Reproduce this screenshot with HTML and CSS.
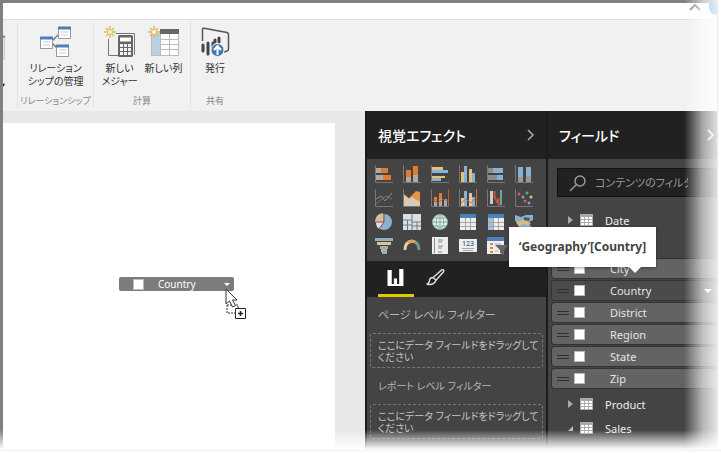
FILE: index.html
```html
<!DOCTYPE html>
<html lang="ja">
<head>
<meta charset="utf-8">
<title>Power BI Desktop</title>
<link rel="stylesheet" href="styles.css">
</head>
<body>
<div class="window">
  <header class="titlebar">
    <svg class="collapse" viewBox="0 0 12 8"><path d="M1 7l5-5 5 5" fill="none" stroke="#8a8a8a" stroke-width="2"/></svg>
    <span class="help"></span>
  </header>

  <nav class="ribbon">
    <div class="group group-cut">
      <svg viewBox="0 0 14 84"><path d="M0 11h1v24H0" fill="none" stroke="#bbb"/><path d="M0 11h2" stroke="#4a80b5" stroke-width="2"/><path d="M-3 60h5l-2 3z" fill="#222"/></svg>
    </div>
    <div class="group group-rel">
      <div class="commands">
        <button class="command">
          <svg class="command-icon" viewBox="0 0 32 32">
            <path d="M13 15l6-6M13 17l5 5" stroke="#777" stroke-width="1.5"/>
            <g fill="#fff" stroke="#9a9a9a"><path d="M1.500 11.500h12v11h-12zM19.500 1.500h12v11h-12zM17.500 19.500h12v11h-12z"/></g>
            <path d="M1 12h13M19 2h13M17 20h13" stroke="#4a80b5" stroke-width="3"/>
            <path d="M4 16h7M4 19h7M22 6h7M22 9h7M20 24h7M20 27h7" stroke="#c4d0dc"/>
          </svg>
          <span>リレーション<br>シップの管理</span>
        </button>
      </div>
      <span class="group-label">リレーションシップ</span>
    </div>
    <div class="group group-calc">
      <div class="commands">
        <button class="command">
          <svg class="command-icon" viewBox="0 0 32 32">
            <path d="M12 7.500h18.500V29M4.500 13v16.500H14" fill="none" stroke="#777"/>
            <rect x="14" y="9" width="15" height="22" rx="1.500" fill="#666"/>
            <path d="M16 11.500h11v4H16z" fill="#fff"/>
            <path d="M16 18h3v3h-3zM20 18h3v3h-3zM24 18h3v3h-3zM16 22h3v3h-3zM20 22h3v3h-3zM24 22h3v3h-3zM16 26h3v3h-3zM20 26h3v3h-3zM24 26h3v3h-3z" fill="#f3f3f3"/>
            <path d="M6 0v12M0 6h12M2 2l8 8M10 2l-8 8" stroke="#dfbd67" stroke-width="1.500"/><circle cx="6" cy="6" r="2.500" fill="#fff5d5" stroke="#dfbd67"/>
          </svg>
          <span>新しい<br>メジャー</span>
        </button>
        <button class="command">
          <svg class="command-icon" viewBox="0 0 32 32">
            <path d="M3.500 5.500h27v24h-27z" fill="#fff" stroke="#bbb"/><path d="M4 6h9v23H4z" fill="#b9d0e3"/>
            <path d="M12 3h19v5H12z" fill="#666"/><path d="M12.500 8v21M21.500 8v21M12 13.500h18M12 18.500h18M12 23.500h18" stroke="#bbb"/>
            <path d="M6 0v12M0 6h12M2 2l8 8M10 2l-8 8" stroke="#dfbd67" stroke-width="1.500"/><circle cx="6" cy="6" r="2.500" fill="#fff5d5" stroke="#dfbd67"/>
          </svg>
          <span>新しい列</span>
        </button>
      </div>
      <span class="group-label">計算</span>
    </div>
    <div class="group group-share">
      <div class="commands">
        <button class="command">
          <svg class="command-icon" viewBox="0 0 32 32">
            <path d="M3.500 15V3.500Q3.500 2 5 2.200L28 6.500Q29.500 7 29.500 8.500V23q0 1.500-1.500 2l-3 1" fill="none" stroke="#555" stroke-width="1.500"/>
            <path d="M4 19v6M9 17v11M14 17v9M16 14v2M20 12v4" stroke="#444" stroke-width="3" stroke-linecap="round"/>
            <circle cx="18.500" cy="24" r="6.500" fill="#4379b0" stroke="#f1f1f1"/>
            <path d="M18.500 29v-8M15 24l3.500-4 3.500 4" fill="none" stroke="#fff" stroke-width="2"/>
          </svg>
          <span>発行</span>
        </button>
      </div>
      <span class="group-label">共有</span>
    </div>
  </nav>

  <div class="workspace">
    <main class="report">
      <div class="page">
        <div class="chip">
          <i class="box"></i><span>Country</span><i class="caret"></i>
          <svg class="cursor" viewBox="0 0 22 32">
            <path d="M2 17h11v8H2z" fill="#fff" stroke="#333" stroke-dasharray="2 1"/>
            <path d="M1 1v15l3.500-3 3 6 3-1.500-3-5.500h4.500z" fill="#fff" stroke="#333"/>
            <path d="M10.500 20.500h10v10h-10z" fill="#fff" stroke="#222"/><path d="M15.500 23v5M13 25.500h5" stroke="#222" stroke-width="1.500"/>
          </svg>
        </div>
      </div>
    </main>

    <aside class="pane visuals">
      <h2 class="pane-title">視覚エフェクト<svg class="chevron" viewBox="0 0 8 12"><path d="M1 1l5 5-5 5" fill="none" stroke="#aaa" stroke-width="1.500"/></svg></h2>
      <div class="gallery">
        <svg viewBox="0 0 18 18"><path d="M.5 0v17.500H18" class="axis"/><path d="M1 3h5v5H1zM1 10h7v5H1z" fill="#aaa"/><path d="M6 3h7v5H6zM8 10h8v5H8z" fill="#e07b30"/></svg>
        <svg viewBox="0 0 18 18"><path d="M.5 0v17.500H18" class="axis"/><path d="M3 12h5v5H3zM10 10h5v7h-5z" fill="#aaa"/><path d="M3 5h5v7H3zM10 1h5v9h-5z" fill="#e07b30"/></svg>
        <svg viewBox="0 0 18 18"><path d="M.5 0v17.500H18" class="axis"/><path d="M1 2h11v3H1zM1 11h13v2H1z" fill="#e2c27a"/><path d="M1 5h16v3H1zM1 13h9v3H1z" fill="#8ab1d1"/></svg>
        <svg viewBox="0 0 18 18"><path d="M.5 0v17.500H18" class="axis"/><path d="M2 7h3v10H2zM10 4h3v13h-3z" fill="#e2c27a"/><path d="M5 1h3v16H5zM13 8h3v9h-3z" fill="#8ab1d1"/></svg>
        <svg viewBox="0 0 18 18"><path d="M.5 0v17.500H18" class="axis"/><path d="M1 3h5v5H1zM1 10h9v5H1z" fill="#8b8b8b"/><path d="M6 3h10v5H6zM10 10h6v5h-6z" fill="#8ab1d1"/></svg>
        <svg viewBox="0 0 18 18"><path d="M.5 0v17.500H18" class="axis"/><path d="M3 12h5v5H3zM11 11h5v6h-5z" fill="#999"/><path d="M3 2h5v10H3zM11 2h5v9h-5z" fill="#8ab1d1"/></svg>

        <svg viewBox="0 0 18 18"><path d="M.5 0v17.500H18" class="axis"/><path d="M1 10l5-3 4 5 7-8" fill="none" stroke="#6596bb"/><path d="M1 15l6-5 4-3 6 3" fill="none" stroke="#b75a48"/></svg>
        <svg viewBox="0 0 18 18"><path d="M1 5l5 4 7-7 4 1v14H1z" fill="#e99445"/><path d="M1 6l5 4 3-2 8 5v4H1z" fill="#d8cab4"/><path d="M.5 0v17.500H18" class="axis"/></svg>
        <svg viewBox="0 0 18 18"><path d="M17.500 0v17.500H.5V0" class="axis"/><path d="M3 8h3v9H3zM8 4h3v13H8zM13 10h3v7h-3z" fill="#aaa"/><path d="M3 8h3v5H3zM8 4h3v6H8z" fill="#e07b30"/><path d="M17.500 0v17M2 11l5 3 5-4 5 2" fill="none" stroke="#c75532"/></svg>
        <svg viewBox="0 0 18 18"><path d="M.5 0v17.500H18" class="axis"/><path d="M2 9h3v8H2zM10 4h3v13h-3z" fill="#d8cab4"/><path d="M5 2h3v15H5zM13 8h3v9h-3z" fill="#8ab1d1"/><path d="M17.500 0v17M2 14l5-4 5 4 4-4" fill="none" stroke="#d86d2d"/></svg>
        <svg viewBox="0 0 18 18"><path d="M.5 0v17.500H18" class="axis"/><path d="M4.500 2v13" stroke="#ccc" stroke-width="3"/><path d="M7.500 2v6l4 7V9" fill="none" stroke="#c65348" stroke-width="2"/><path d="M14 1v15" stroke="#6ba691" stroke-width="2"/></svg>
        <svg viewBox="0 0 18 18"><path d="M.5 0v17.500H18" class="axis"/><g fill="#6fa4c8"><circle cx="8" cy="8" r="1.500"/><circle cx="14" cy="14" r="1.500"/></g><g fill="#d06150"><circle cx="4" cy="5" r="1.500"/><circle cx="10" cy="12" r="1.500"/></g><circle cx="12" cy="4" r="1.500" fill="#6ba691"/><circle cx="16" cy="8" r="1.500" fill="#e2c27a"/></svg>

        <svg viewBox="0 0 18 18"><circle cx="9" cy="9" r="8" fill="#8ab1d1"/><path d="M8 9V0Q0 1 0 9z" fill="#d8bca0"/><path d="M9 9H1q0 5 3 7z" fill="#ddd"/><path d="M9 9V1M9 9H1M9 9l-5 7" stroke="#a4483c"/></svg>
        <svg viewBox="0 0 18 18"><path d="M0 1h18v16H0z" fill="#ddd"/><path d="M0 7h9M9 1v16M9 9h9M4.500 7v10M0 12h9M14 9v8M9 13h9" stroke="#5f8095" stroke-width="1"/></svg>
        <svg viewBox="0 0 18 18"><circle cx="9" cy="9" r="7.500" fill="#e8f2ef" stroke="#89b7aa"/><path d="M1 9h16M9 1v16M3 5h12M3 13h12M9 1Q1 9 9 17Q17 9 9 1" fill="none" stroke="#7eaaa4"/></svg>
        <svg viewBox="0 0 18 18"><path d="M1 1h16v16H1z" fill="#eee"/><path d="M1 1h16v4H1z" fill="#4b81b8"/><path d="M1 9.500h16M1 13.500h16M6.500 5v12M11.500 5v12" stroke="#a6a6a6"/></svg>
        <svg viewBox="0 0 18 18"><path d="M1 1h16v16H1z" fill="#eee"/><path d="M1 1h16v4H1z" fill="#4b81b8"/><path d="M1 5h5v12H1z" fill="#9ec0db"/><path d="M1 9.500h16M1 13.500h16M6.500 5v12M11.500 5v12" stroke="#a6a6a6"/></svg>
        <svg viewBox="0 0 18 18"><path d="M0 2l6 2 5-2h7v5l-4 2 3 8-8-3-5 2 2-5-6-3z" fill="#8ab1d1"/><path d="M1 9l7-2 8 3-3 2-5-1-4 3z" fill="#ddbb78"/><path d="M9 4l6 1-1 3-5-1z" fill="#4f5965"/></svg>

        <svg viewBox="0 0 18 18"><path d="M0 1h18v3H0zM5 9h8v3H5zM7 15h5v2H7z" fill="#8ab1d1"/><path d="M2 5h14v3H2z" fill="#e2c27a"/><path d="M6 12h6v3H6z" fill="#bcae8a"/></svg>
        <svg viewBox="0 0 18 18"><path d="M2 13q0-8 7-9" fill="none" stroke="#e5cf98" stroke-width="3"/><path d="M8 4q8 0 8 9" fill="none" stroke="#709d87" stroke-width="3"/><path d="M5 6q3-3 7-1" fill="none" stroke="#e3a35d" stroke-width="3"/></svg>
        <svg viewBox="0 0 18 18"><path d="M1 0h16v17H1z" fill="#eee"/><path d="M3.500 1v15" stroke="#888"/><path d="M7 3h5M7 5h4M7 9h5M7 11h4M7 15h4" stroke="#888"/></svg>
        <svg viewBox="0 0 18 18"><path d="M0 2h18v13H0z" fill="#eee"/><text x="9" y="9" class="digits">123</text><path d="M3 11.500h12M4 13.500h10" stroke="#aaa"/></svg>
        <svg viewBox="0 0 22 18" class="wide"><path d="M0 0h17v17H0z" fill="#eee"/><path d="M0 0h17v4H0z" fill="#4b81b8"/><path d="M3 7h3M3 11h3M3 15h3" stroke="#d08d46" stroke-width="2"/><path d="M8 7h6M8 14h3" stroke="#ccc" stroke-width="2"/><path d="M8 8h13l-4 5v5l-4-2v-3z" fill="#666"/></svg>
      </div>
      <div class="tabs">
        <button class="tab active" aria-label="フィールド"><svg viewBox="0 0 16 16"><path d="M0 1h4v13H0zM6 9h3v5H6zM11 0h4v14h-4zM0 14h15v2H0z" fill="#fff"/></svg></button>
        <button class="tab" aria-label="書式"><svg viewBox="0 0 20 18"><path d="M7 9l9-8q3-1 2 2l-8 9zM7 9q-4 0-4 4-1 3-3 3 7 2 10-4zM7 9l3 3" fill="none" stroke="#ddd" stroke-width="1.500"/></svg></button>
      </div>
      <section class="filters">
        <h3>ページ レベル フィルター</h3>
        <p class="drop">ここにデータ フィールドをドラッグして<br>ください</p>
        <h3 class="small">レポート レベル フィルター</h3>
        <p class="drop">ここにデータ フィールドをドラッグして<br>ください</p>
      </section>
    </aside>

    <aside class="pane fields">
      <h2 class="pane-title">フィールド<svg class="chevron" viewBox="0 0 8 12"><path d="M1 1l5 5-5 5" fill="none" stroke="#fff" stroke-width="1.500"/></svg></h2>
      <label class="search">
        <svg viewBox="0 0 18 18"><circle cx="11" cy="7" r="5" fill="none" stroke="#999" stroke-width="1.500"/><path d="M7.500 10.500L1 17" stroke="#999" stroke-width="1.500"/></svg>
        <input type="text" placeholder="コンテンツのフィルター" aria-label="コンテンツのフィルター">
      </label>
      <div class="table-row date"><i class="arrow"></i><svg class="grid-icon" viewBox="0 0 13 12"><path d="M0 0h13v12H0z" fill="#aaa"/><path d="M1 3h3v2H1zM5 3h3v2H5zM9 3h3v2H9zM1 6h3v2H1zM5 6h3v2H5zM9 6h3v2H9zM1 9h3v2H1zM5 9h3v2H5zM9 9h3v2H9z" fill="#fff"/></svg>Date</div>
      <ul class="columns">
        <li><i class="grip"></i><i class="box"></i><span>City</span></li>
        <li class="current"><i class="grip"></i><i class="box"></i><span>Country</span><i class="caret"></i></li>
        <li><i class="grip"></i><i class="box"></i><span>District</span></li>
        <li><i class="grip"></i><i class="box"></i><span>Region</span></li>
        <li><i class="grip"></i><i class="box"></i><span>State</span></li>
        <li><i class="grip"></i><i class="box"></i><span>Zip</span></li>
      </ul>
      <div class="table-row"><i class="arrow"></i><svg class="grid-icon" viewBox="0 0 13 12"><path d="M0 0h13v12H0z" fill="#aaa"/><path d="M1 3h3v2H1zM5 3h3v2H5zM9 3h3v2H9zM1 6h3v2H1zM5 6h3v2H5zM9 6h3v2H9zM1 9h3v2H1zM5 9h3v2H5zM9 9h3v2H9z" fill="#fff"/></svg>Product</div>
      <div class="table-row"><i class="arrow open"></i><svg class="grid-icon" viewBox="0 0 13 12"><path d="M0 0h13v12H0z" fill="#aaa"/><path d="M1 3h3v2H1zM5 3h3v2H5zM9 3h3v2H9zM1 6h3v2H1zM5 6h3v2H5zM9 6h3v2H9zM1 9h3v2H1zM5 9h3v2H5zM9 9h3v2H9z" fill="#fff"/></svg>Sales</div>
      <div class="tooltip">‘Geography’[Country]</div>
    </aside>
  </div>
  <div class="fade fade-right"></div>
  <div class="fade fade-bottom"></div>
</div>
</body>
</html>
```
FILE: styles.css
```css
* { box-sizing: border-box; }

body {
  margin: 0;
  background: #fff;
  font-family: "Noto Sans", "Noto Sans CJK JP", sans-serif;
  font-size: 11px;
}

button, input { font: inherit; }
button { border: 0; padding: 0; background: none; color: inherit; }
h2, h3, p, ul { margin: 0; padding: 0; }
svg { display: block; flex: none; }

.window {
  position: relative;
  display: flex;
  flex-direction: column;
  height: 100vh;
  padding: 3px 4px 3px 3px;
  background: #808080;
  overflow: hidden;
  font-feature-settings: "palt";
}

.titlebar {
  flex: none;
  display: flex;
  justify-content: flex-end;
  gap: 8px;
  height: 16px;
  background: #fff;
  overflow: hidden;
}
.collapse { width: 12px; height: 8px; }
.help { width: 8px; height: 12px; border-radius: 0 0 0 8px; background: #2d86d0; }

.ribbon {
  flex: none;
  display: flex;
  height: 92px;
  padding-bottom: 2px;
  background: #f1f1f1;
  border-top: 1px solid #e0e0e0;
  color: #333;
}
.group {
  display: flex;
  flex-direction: column;
  align-items: center;
  justify-content: space-between;
  margin: 2px 0;
  padding: 4px 0 0;
  border-right: 1px solid #e2e2e2;
}
.group-cut { width: 15px; align-items: flex-start; }
.group-cut svg { width: 14px; height: 81px; }
.group-rel { width: 76px; }
.group-calc { width: 97px; }
.group-share { width: 48px; border: 0; }
.commands { display: flex; gap: 7px; }
.command {
  display: flex;
  flex-direction: column;
  align-items: center;
  gap: 4px;
  font-size: 10px;
  line-height: 13px;
  white-space: nowrap;
}
.command-icon { width: 32px; height: 32px; }
.group-label { font-size: 9px; line-height: 12px; color: #888; white-space: nowrap; }

.workspace {
  flex: 1;
  min-height: 0;
  display: grid;
  grid-template-columns: 1fr 182px 170px;
}
.report {
  display: flex;
  padding: 12px 30px 0 0;
  background: #e8e8e8;
}
.page { position: relative; flex: 1; background: #fff; }

.chip {
  position: absolute;
  left: 116px;
  top: 154px;
  display: flex;
  align-items: center;
  width: 115px;
  height: 14px;
  padding: 0 4px 0 15px;
  border-radius: 2px;
  background: #7c7c7c;
  color: #fff;
  font-size: 10px;
}
.chip span { flex: 1; margin-left: 15px; }
.cursor { position: absolute; left: 106px; top: 11px; width: 22px; height: 32px; }
.box { width: 9px; height: 9px; background: #fff; outline: 1px solid #bbb; }
.caret { border: 4px solid transparent; border-top-color: #fff; border-bottom: 0; }
.chip .caret { border-width: 3px; border-bottom: 0; }

.pane { background: #444; color: #ddd; overflow: hidden; min-width: 0; }
.visuals { border: solid #1b1b1b; border-width: 0 1px 0 2px; }
.pane-title {
  display: flex;
  align-items: center;
  justify-content: space-between;
  height: 48px;
  padding: 0 11px;
  background: #212121;
  color: #fff;
  font-size: 14px;
  font-weight: 500;
}
.chevron { width: 8px; height: 12px; }

.gallery {
  display: grid;
  grid-template-columns: repeat(6, 18px);
  gap: 6px 10px;
  padding: 6px 8px;
}
.gallery svg { width: 18px; height: 18px; }
.gallery .wide { width: 22px; }
.axis { fill: none; stroke: #777; }
.digits { font-size: 7px; font-weight: 500; text-anchor: middle; fill: #3d6787; }

.tabs {
  display: flex;
  gap: 4px;
  height: 36px;
  padding: 0 11px;
  background: #212121;
}
.tab {
  display: flex;
  align-items: center;
  justify-content: center;
  width: 36px;
  border-bottom: 3px solid transparent;
}
.tab.active { border-color: #e3c800; }
.tab svg { width: 20px; height: 17px; }

.filters { padding: 0 3px; }
.filters h3 {
  height: 36px;
  padding: 0 8px;
  font-size: 11px;
  font-weight: 400;
  line-height: 36px;
  color: #b5b5b5;
}
.filters .small { font-size: 10px; }
.drop {
  height: 35px;
  padding: 5px 0 0 7px;
  border: 1px dashed #777;
  border-radius: 3px;
  font-size: 10px;
  line-height: 12px;
  color: #c4c4c4;
  white-space: nowrap;
}

.fields {
  position: relative;
  border-left: 1px solid #1b1b1b;
  overflow: visible;
}
.fields .pane-title { padding-right: 2px; }
.search {
  display: flex;
  align-items: center;
  gap: 8px;
  height: 29px;
  margin: 9px 0 0 9px;
  padding: 0 28px 0 11px;
  border: 1px solid #111;
  background: #212121;
}
.search svg { width: 18px; height: 18px; }
.search input {
  flex: 1;
  min-width: 0;
  padding: 0;
  border: 0;
  background: none;
  font-size: 11px;
  color: #aaa;
}
.search input::placeholder { color: #999; }

.table-row {
  display: flex;
  align-items: center;
  height: 24px;
  padding-left: 20px;
  color: #eee;
}
.date { margin-top: 11px; }
.arrow { border: 4px solid transparent; border-left: 5px solid #aaa; border-right: 0; }
.arrow.open { border: 0; border-bottom: 5px solid #bbb; border-left: 5px solid transparent; }
.grid-icon { width: 13px; height: 12px; margin: 0 12px 0 7px; }

.columns {
  display: flex;
  flex-direction: column;
  gap: 3px;
  margin: 27px 0 4px 4px;
  list-style: none;
}
.columns li {
  display: flex;
  align-items: center;
  height: 19px;
  padding: 0 5px;
  border-radius: 2px;
  background: #636363;
  outline: 1px solid #333;
  color: #e5e5e5;
}
.columns .current { background: #4b4b4b; }
.columns span { flex: 1; margin-left: 26px; }
.grip { width: 12px; height: 4px; margin-right: 6px; border: solid #303030; border-width: 1px 0; }

.tooltip {
  position: absolute;
  left: -39px;
  top: 116px;
  width: 147px;
  height: 40px;
  background: #fff;
  box-shadow: 0 1px 3px #0006;
  color: #444;
  font-size: 12px;
  font-weight: 700;
  line-height: 40px;
  text-align: center;
  white-space: nowrap;
}
.tooltip::after {
  content: "";
  position: absolute;
  right: 15px;
  top: 100%;
  border: 6px solid transparent;
  border-top-color: #fff;
  border-bottom: 0;
}

.fade { position: absolute; pointer-events: none; }
.fade-right {
  top: 0;
  bottom: 0;
  right: 0;
  width: 37px;
  background: linear-gradient(to right, #fff0, #fff9 50%, #ffffffd8 88%, #e4e4e4 89%, #fff 94%);
}
.fade-bottom {
  left: 0;
  right: 0;
  bottom: 0;
  height: 23px;
  background: linear-gradient(#fff0, #fff9 50%, #fff 86%, #eee 88%, #fff 94%);
}
```
